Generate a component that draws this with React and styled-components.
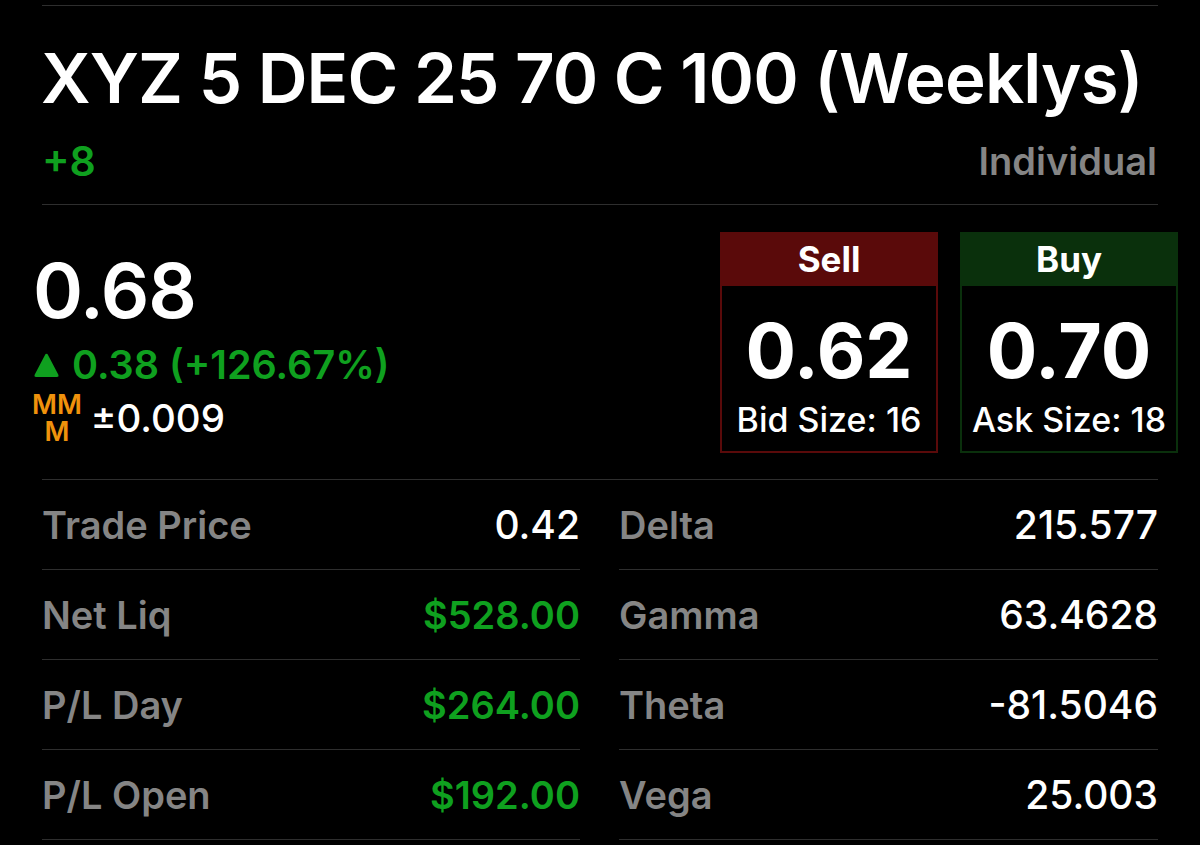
import React from "react";
import styled, { createGlobalStyle } from "styled-components";

const Global = createGlobalStyle`
  html, body { margin: 0; padding: 0; background: #000; }
  body { font-family: Inter, "Liberation Sans", sans-serif; overflow: hidden; }
`;
const Page = styled.div`
  width: 1200px; height: 845px; overflow: hidden; background: #000; color: #fff;
  display: flex; flex-direction: column; padding: 5px 42px 0; box-sizing: border-box;
`;
const Rule = styled.div`height: 1px; background: #2e2e2e; flex: none;`;
const Title = styled.h1`
  margin: 0 0 0 -1px; font-size: 69px; font-weight: 600; height: 141px; line-height: 144px; white-space: nowrap; letter-spacing: -0.9px;
`;
const SubRow = styled.div`display: flex; justify-content: space-between; align-items: center; height: 27px; padding-bottom: 30px; padding-right: 1px; font-size: 38px; font-weight: 600;`;
const Qty = styled.span`color: #0fa01f; font-size: 41px;`;
const Account = styled.span`color: #858585;`;
const Quote = styled.div`display: flex; justify-content: space-between; height: 274px; margin: 0 -20px 0 -8px; align-items: flex-start; padding-top: 27px; box-sizing: border-box;`;
const Left = styled.div`display: flex; flex-direction: column; padding-top: 18px;`;
const Last = styled.div`font-size: 76px; font-weight: 600; line-height: 80px; margin-left: -1px; letter-spacing: -1.2px;`;
const Change = styled.div`display: flex; align-items: center; gap: 13px; color: #0fa01f; font-size: 39.5px; font-weight: 600; line-height: 50px; margin-top: 10px;`;
const MoveRow = styled.div`display: flex; align-items: center; gap: 9px; font-size: 38.5px; font-weight: 500; line-height: 50px; margin-top: 1px;`;
const MM = styled.div`color: #f0920c; font-size: 27px; font-weight: 600; line-height: 27px; text-align: center; margin-left: -2px;`;
const Boxes = styled.div`display: flex; gap: 22px;`;
const Box = styled.div`width: 218px; height: 221px; box-sizing: border-box; border: 2px solid ${p => p.$c}; display: flex; flex-direction: column; align-items: center;`;
const BoxHead = styled.div`align-self: stretch; height: 52px; background: ${p => p.$c}; font-size: 35px; font-weight: 700; display: flex; align-items: center; justify-content: center; padding-bottom: 2px; box-sizing: border-box;`;
const BoxPrice = styled.div`font-size: 75px; font-weight: 700; line-height: 88px; margin-top: 21px;`;
const BoxSize = styled.div`font-size: 34px; font-weight: 500; line-height: 44px; margin-top: 3px; white-space: nowrap;`;
const Grid = styled.div`display: grid; grid-template-columns: 538px 539px; column-gap: 39px;`;
const Col = styled.div`display: flex; flex-direction: column;`;
const Row = styled.div`height: 90px; flex: none; box-sizing: border-box; display: flex; align-items: center; justify-content: space-between; border-bottom: 1px solid #2e2e2e; font-size: 38px;`;
const Label = styled.span`color: #858585; font-weight: 600;`;
const Value = styled.span`color: ${p => (p.$green ? "#0fa01f" : "#fff")}; font-weight: ${p => (p.$green ? 600 : 500)}; font-size: ${p => (p.$green ? 38 : 39)}px;`;

const left = [["Trade Price","0.42"],["Net Liq","$528.00",1],["P/L Day","$264.00",1],["P/L Open","$192.00",1]];
const right = [["Delta","215.577"],["Gamma","63.4628"],["Theta","-81.5046"],["Vega","25.003"]];
const Column = ({ rows }) => (
  <Col>{rows.map(([l, v, g]) => <Row key={l}><Label>{l}</Label><Value $green={g}>{v}</Value></Row>)}</Col>
);

export default function App() {
  return (
    <Page>
      <Global />
      <Rule />
      <Title>XYZ 5 DEC 25 70 C 100 (Weeklys)</Title>
      <SubRow><Qty>+8</Qty><Account>Individual</Account></SubRow>
      <Rule />
      <Quote>
        <Left>
          <Last>0.68</Last>
          <Change>
            <svg width="25" height="24" viewBox="0 0 25 24"><path d="M12.5 1 Q13 0 14 2 L24.5 22 Q25 24 23 24 H2 Q0 24 0.5 22 L11 2 Q12 0 12.5 1 Z" fill="#0fa01f" /></svg>
            <span>0.38 (+126.67%)</span>
          </Change>
          <MoveRow>
            <MM>MM<br />M</MM>
            <span>±0.009</span>
          </MoveRow>
        </Left>
        <Boxes>
          <Box $c="#5a0a0a"><BoxHead $c="#5a0a0a">Sell</BoxHead><BoxPrice>0.62</BoxPrice><BoxSize>Bid Size: 16</BoxSize></Box>
          <Box $c="#0a300c"><BoxHead $c="#0a300c">Buy</BoxHead><BoxPrice>0.70</BoxPrice><BoxSize>Ask Size: 18</BoxSize></Box>
        </Boxes>
      </Quote>
      <Rule />
      <Grid><Column rows={left} /><Column rows={right} /></Grid>
    </Page>
  );
}
